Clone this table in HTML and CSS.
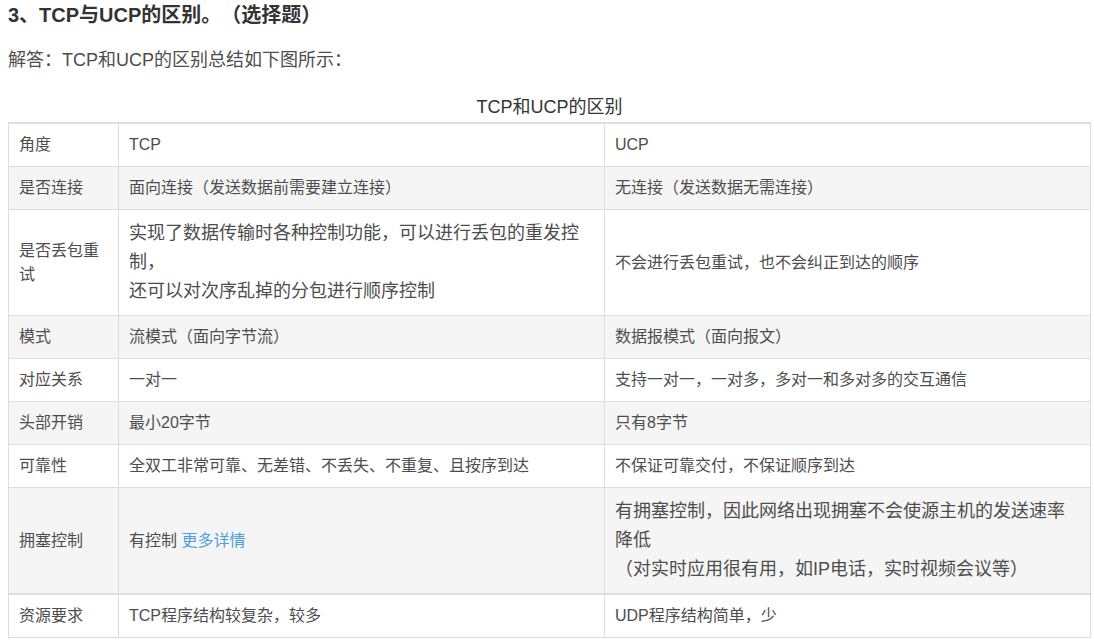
FILE: index.html
```html
<!DOCTYPE html>
<html lang="zh-CN">
<head>
<meta charset="utf-8">
<title>TCP与UCP的区别</title>
<link rel="stylesheet" href="styles.css">
</head>
<body>
<div class="page">
  <h3 class="title">3、TCP与UCP的区别。（选择题）</h3>
  <p class="answer">解答：TCP和UCP的区别总结如下图所示：</p>
  <table class="cmp">
    <caption class="cap">TCP和UCP的区别</caption>
    <colgroup>
      <col class="c1">
      <col class="c2">
      <col class="c3">
    </colgroup>
    <tbody>
      <tr><td>角度</td><td>TCP</td><td>UCP</td></tr>
      <tr class="alt"><td>是否连接</td><td>面向连接（发送数据前需要建立连接）</td><td>无连接（发送数据无需连接）</td></tr>
      <tr><td>是否丢包重试</td><td class="big">实现了数据传输时各种控制功能，可以进行丢包的重发控制，<br>还可以对次序乱掉的分包进行顺序控制</td><td>不会进行丢包重试，也不会纠正到达的顺序</td></tr>
      <tr class="alt"><td>模式</td><td>流模式（面向字节流）</td><td>数据报模式（面向报文）</td></tr>
      <tr><td>对应关系</td><td>一对一</td><td>支持一对一，一对多，多对一和多对多的交互通信</td></tr>
      <tr class="alt"><td>头部开销</td><td>最小20字节</td><td>只有8字节</td></tr>
      <tr><td>可靠性</td><td>全双工非常可靠、无差错、不丢失、不重复、且按序到达</td><td>不保证可靠交付，不保证顺序到达</td></tr>
      <tr class="alt thick"><td>拥塞控制</td><td>有控制 <a class="more" href="#">更多详情</a></td><td class="big">有拥塞控制，因此网络出现拥塞不会使源主机的发送速率降低<br>（对实时应用很有用，如IP电话，实时视频会议等）</td></tr>
      <tr><td>资源要求</td><td>TCP程序结构较复杂，较多</td><td>UDP程序结构简单，少</td></tr>
    </tbody>
  </table>
</div>
</body>
</html>
```
FILE: styles.css
```css
html, body {
  margin: 0;
  padding: 0;
  background: #ffffff;
}

body {
  font-family: "Liberation Sans", "Noto Sans CJK SC", sans-serif;
  color: #4d4d4d;
  text-spacing-trim: space-all;
}

.page {
  padding: 0 0 0 8px;
  width: 1082px;
}

.title {
  margin: 0;
  font-size: 20px;
  line-height: 30px;
  font-weight: bold;
  color: #333333;
}

.answer {
  margin: 16px 0 0 0;
  font-size: 18px;
  line-height: 28px;
  color: #4d4d4d;
}

.cmp {
  margin-top: 18px;
  width: 1082px;
  table-layout: fixed;
  border-collapse: collapse;
  border-top: 2px solid #dddddd;
}

.cap {
  font-size: 18px;
  line-height: 28px;
  color: #333333;
  padding-top: 1px;
  padding-bottom: 1px;
  text-align: center;
}

.c1 { width: 110px; }
.c2 { width: 486px; }
.c3 { width: 486px; }

.cmp td {
  border: 1px solid #dddddd;
  padding: 9px 10px;
  font-size: 16px;
  line-height: 24px;
  vertical-align: middle;
  color: #4d4d4d;
}

.cmp tr.alt td {
  background: #f5f5f5;
}

.cmp tr.thick td {
  border-bottom: 2px solid #dddddd;
}

.cmp td.big {
  font-size: 18px;
  line-height: 29px;
}

.more {
  color: #4a9fe0;
  text-decoration: none;
}
```
